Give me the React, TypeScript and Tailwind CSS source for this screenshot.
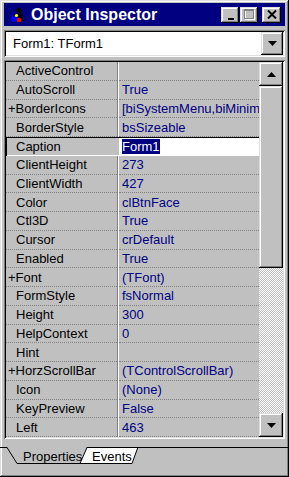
import React from "react";

const raised =
  "shadow-[inset_-1px_-1px_#000000,inset_1px_1px_#dfdfdf,inset_-2px_-2px_#808080,inset_2px_2px_#ffffff]";
const sunken =
  "shadow-[inset_1px_1px_#808080,inset_-1px_-1px_#ffffff,inset_2px_2px_#000000,inset_-2px_-2px_#dfdfdf]";

const rows: [string, string][] = [
  ["ActiveControl", ""],
  ["AutoScroll", "True"],
  ["+BorderIcons", "[biSystemMenu,biMinimize,biMaximize]"],
  ["BorderStyle", "bsSizeable"],
  ["Caption", "Form1"],
  ["ClientHeight", "273"],
  ["ClientWidth", "427"],
  ["Color", "clBtnFace"],
  ["Ctl3D", "True"],
  ["Cursor", "crDefault"],
  ["Enabled", "True"],
  ["+Font", "(TFont)"],
  ["FormStyle", "fsNormal"],
  ["Height", "300"],
  ["HelpContext", "0"],
  ["Hint", ""],
  ["+HorzScrollBar", "(TControlScrollBar)"],
  ["Icon", "(None)"],
  ["KeyPreview", "False"],
  ["Left", "463"],
];

function TitleIcon() {
  return (
    <svg width="16" height="16" viewBox="0 0 16 16">
      <circle cx="9" cy="3.5" r="2.8" fill="#000" />
      <path d="M7 6 L11 6 L14 14 L11 14 L9 10 L6 12 Z" fill="#000" />
      <circle cx="4" cy="12" r="3" fill="#0000ff" />
      <circle cx="9" cy="13" r="2.3" fill="#ff0000" />
      <circle cx="6.5" cy="8.5" r="1.6" fill="#ffff00" />
    </svg>
  );
}

function Row({ name, value, selected }: { name: string; value: string; selected: boolean }) {
  const plus = name.startsWith("+");
  if (selected) {
    return (
      <div className="flex h-[18.75px] shadow-[inset_0_1px_#000000,inset_1px_0_#000000,inset_0_-1px_#ffffff]">
        <div className="w-[111px] flex items-center pl-[10px] text-black leading-none">{name}</div>
        <div className="w-[2px]" />
        <div className="w-[140px] mt-[1px] mb-[1px] bg-white flex items-center pl-[3px] leading-none overflow-hidden">
          <span className="bg-[#000080] text-white h-[15px] flex items-center">{value}</span>
        </div>
      </div>
    );
  }
  return (
    <div className="flex h-[18.75px]">
      <div
        className={`w-[111px] flex items-center ${plus ? "pl-[2px]" : "pl-[10px]"} text-black leading-none border-b border-dotted border-[#808080] whitespace-nowrap overflow-hidden`}
      >
        {name}
      </div>
      <div className="w-[2px] border-l border-[#808080] border-r border-r-[#ffffff]" />
      <div className="w-[140px] flex items-center pl-[3px] text-[#000080] leading-none border-b border-dotted border-[#808080] whitespace-nowrap overflow-hidden">
        {value}
      </div>
    </div>
  );
}

function ScrollBtn({ dir }: { dir: "up" | "down" }) {
  return (
    <div className={`w-[24px] h-[24px] bg-[#c0c0c0] ${raised} flex items-center justify-center`}>
      <svg width="9" height="5" viewBox="0 0 9 5">
        {dir === "up" ? <path d="M4.5 0 L9 5 L0 5 Z" fill="#000" /> : <path d="M0 0 L9 0 L4.5 5 Z" fill="#000" />}
      </svg>
    </div>
  );
}

export default function App() {
  return (
    <div
      className={`w-[289px] h-[477px] bg-[#c0c0c0] ${raised} pt-[3px] px-[4px] flex flex-col font-['Liberation_Sans',Arial,sans-serif] overflow-hidden`}
    >
      {/* Title bar */}
      <div className="h-[23px] bg-[#000080] flex items-center pl-[6px] pr-[4px]">
        <TitleIcon />
        <span className="ml-[5px] text-white font-bold text-[16px] leading-none">Object Inspector</span>
        <div className="ml-auto flex items-center">
          <div className={`w-[18px] h-[16px] bg-[#c0c0c0] ${raised} relative`}>
            <div className="absolute left-[7px] top-[11px] w-[6px] h-[2px] bg-black" />
          </div>
          <div className={`ml-[1px] w-[18px] h-[16px] bg-[#c0c0c0] ${raised} flex items-center justify-center`}>
            <svg width="11" height="11" viewBox="0 0 11 11">
              <rect x="1.5" y="1.5" width="9" height="9" fill="none" stroke="#ffffff" />
              <rect x="0.5" y="0.5" width="9" height="9" fill="none" stroke="#808080" />
              <line x1="0" y1="1.5" x2="10" y2="1.5" stroke="#808080" />
            </svg>
          </div>
          <div className={`ml-[4px] w-[19px] h-[16px] bg-[#c0c0c0] ${raised} flex items-center justify-center`}>
            <svg width="10" height="9" viewBox="0 0 10 9">
              <path d="M1 0.5 L9 8.5 M9 0.5 L1 8.5" stroke="#000" strokeWidth="2" />
            </svg>
          </div>
        </div>
      </div>

      {/* Combo */}
      <div className={`mt-[4px] h-[27px] bg-white ${sunken} flex items-center pl-[9px] pr-[2px]`}>
        <span className="text-[13px] text-black leading-none">Form1: TForm1</span>
        <div className={`ml-auto w-[22px] h-[23px] bg-[#c0c0c0] ${raised} flex items-center justify-center`}>
          <svg width="9" height="5" viewBox="0 0 9 5">
            <path d="M0 0 L9 0 L4.5 5 Z" fill="#000" />
          </svg>
        </div>
      </div>

      {/* Grid */}
      <div className={`mt-[3px] h-[379px] ${sunken} p-[2px] flex`}>
        <div className="w-[253px] flex flex-col text-[13px]">
          {rows.map(([n, v]) => (
            <Row key={n} name={n} value={v} selected={n === "Caption"} />
          ))}
        </div>
        <div className="w-[24px] flex flex-col">
          <ScrollBtn dir="up" />
          <div className={`h-[182px] bg-[#c0c0c0] ${raised}`} />
          <div className="flex-1 bg-[image:repeating-conic-gradient(#ffffff_0%_25%,#c0c0c0_0%_50%)] bg-[length:2px_2px]" />
          <ScrollBtn dir="down" />
        </div>
      </div>

      {/* Tabs */}
      <div className="relative h-[34px] -mx-[4px]">
        <svg className="absolute inset-0" width="289" height="34" viewBox="0 0 289 34">
          <polygon points="76,8 80,24 132,24 138,8" fill="#ffffff" />
          <polyline points="80,24.5 132,24.5 138,8" fill="none" stroke="#000" />
          <line x1="0" y1="8.5" x2="289" y2="8.5" stroke="#000" />
          <polygon points="7,8 17,24 80,24 87,8" fill="#c0c0c0" />
          <polyline points="7,8.5 17,24.5 80,24.5 87,8.5" fill="none" stroke="#000" />
          <line x1="9" y1="8.5" x2="85" y2="8.5" stroke="#c0c0c0" strokeWidth="1.5" />
        </svg>
        <span className="absolute left-[23px] top-[11px] text-[13px] leading-none text-black">Properties</span>
        <span className="absolute left-[92px] top-[11px] text-[13px] leading-none text-black">Events</span>
      </div>
    </div>
  );
}
